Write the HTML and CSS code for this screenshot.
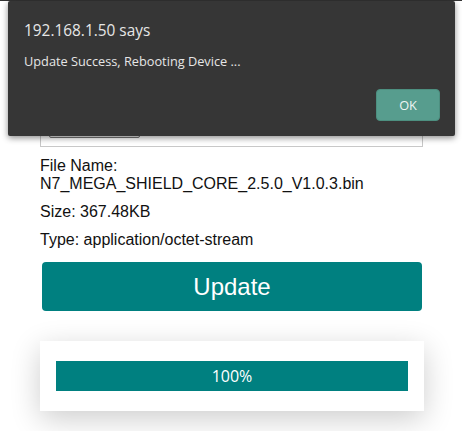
FILE: index.html
```html
<!DOCTYPE html>
<html>
<head>
<meta charset="utf-8">
<link rel="stylesheet" href="styles.css">
</head>
<body>
<main class="page">
  <div class="upload-box">
    <span class="file-btn">Choose File</span>
  </div>
  <div class="info">
    <p class="line">File Name:<br>N7_MEGA_SHIELD_CORE_2.5.0_V1.0.3.bin</p>
    <p class="line">Size: 367.48KB</p>
    <p class="line">Type: application/octet-stream</p>
  </div>
  <button class="update-btn">Update</button>
  <div class="progress-card">
    <div class="progress-bar">100%</div>
  </div>
</main>
<div class="dialog">
  <div class="dialog-title">192.168.1.50 says</div>
  <div class="dialog-msg">Update Success, Rebooting Device ...</div>
  <div class="dialog-actions"><button class="ok-btn">OK</button></div>
</div>
</body>
</html>
```
FILE: styles.css
```css
html, body {
  margin: 0;
  padding: 0;
  background: #fff;
}
body {
  border-top: 1px solid #333;
  font-family: "Liberation Sans", Arial, sans-serif;
  color: #111;
}
.page {
  width: 384px;
  margin: 0 0 0 40px;
  padding-bottom: 20px;
  display: flex;
  flex-direction: column;
}
.upload-box {
  margin-top: 100px;
  height: 46px;
  border: 1px solid #c8c8c8;
  width: 383px;
  padding: 0 8px 8px;
  box-sizing: border-box;
  display: flex;
  align-items: flex-end;
}
.file-btn {
  display: block;
  width: 91px;
  height: 26px;
  border: 1px solid #777;
  border-radius: 2px;
  background: #eee;
  font-size: 13px;
  color: #222;
  box-sizing: border-box;
}
.info {
  margin-top: 10px;
  display: flex;
  flex-direction: column;
  gap: 10px;
}
.line {
  margin: 0;
  font-size: 16px;
  line-height: 18px;
}
.update-btn {
  margin: 13px 0 0 2px;
  width: 380px;
  height: 49px;
  border: none;
  border-radius: 4px;
  background: #008080;
  color: #fff;
  font-family: "Liberation Sans", Arial, sans-serif;
  font-size: 24px;
  padding: 0;
}
.progress-card {
  margin-top: 30px;
  background: #fff;
  padding: 20px 16px;
  box-shadow: 0 8px 30px rgba(0, 0, 0, 0.2);
}
.progress-bar {
  height: 30px;
  background: #008080;
  color: #fff;
  font-family: "Open Sans", "Noto Sans", sans-serif;
  font-size: 16px;
  display: flex;
  align-items: center;
  justify-content: center;
}
.dialog {
  position: absolute;
  left: 8px;
  top: 1px;
  width: 447px;
  height: 135px;
  box-sizing: border-box;
  background: #363636;
  border-radius: 2px;
  box-shadow: 0 2px 6px rgba(0, 0, 0, 0.45);
  padding: 16px 15px 15px 16px;
  font-family: "Open Sans", "Noto Sans", sans-serif;
  color: #e6e6e6;
  display: flex;
  flex-direction: column;
}
.dialog-title {
  font-size: 15.4px;
  line-height: 20px;
  margin-top: 4px;
}
.dialog-msg {
  font-size: 12.75px;
  line-height: 16px;
  margin-top: 12px;
}
.dialog-actions {
  margin-top: auto;
  display: flex;
  justify-content: flex-end;
}
.ok-btn {
  width: 64px;
  height: 32px;
  border: 1px solid #4d8f80;
  border-radius: 4px;
  background: #579d8e;
  color: #eef5f3;
  font-family: "Open Sans", "Noto Sans", sans-serif;
  font-size: 12.75px;
  padding: 0;
}
```
